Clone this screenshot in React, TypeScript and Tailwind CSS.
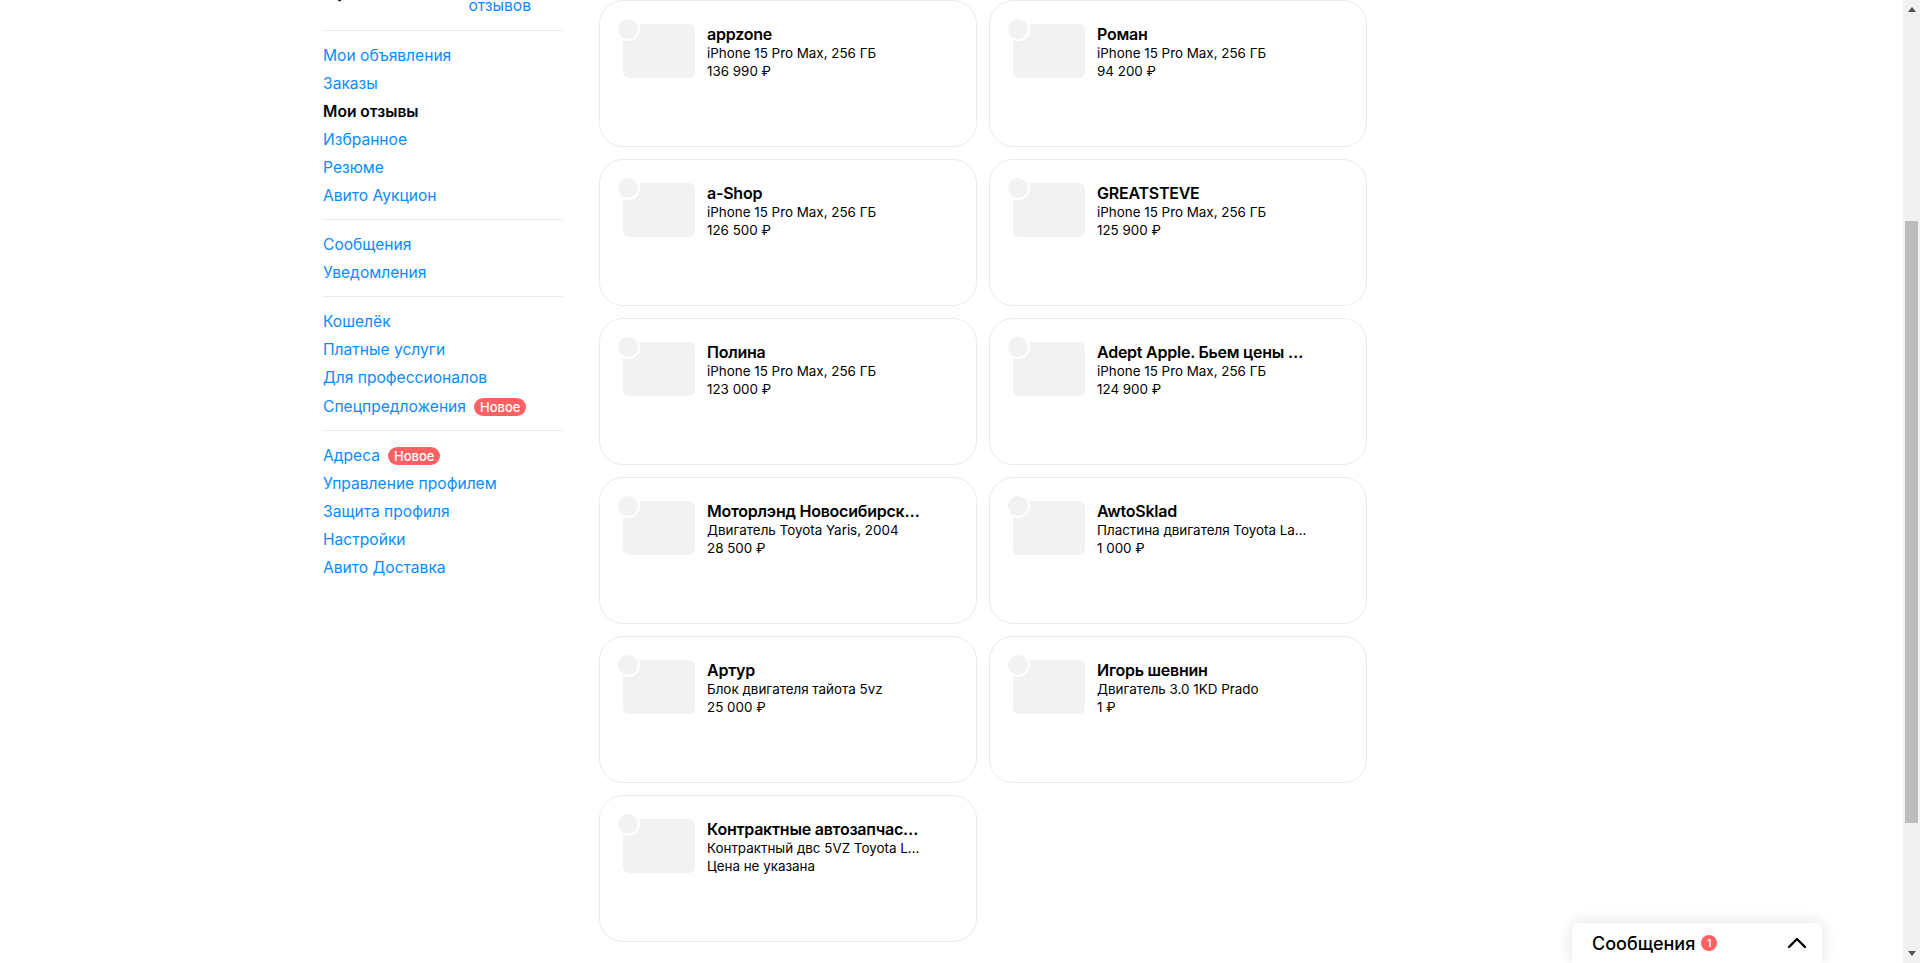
import { ChevronUp } from 'lucide-react';

interface Review {
  name: string;
  item: string;
  price: string;
}

const reviews: Review[] = [
  { name: 'appzone', item: 'iPhone 15 Pro Max, 256 ГБ', price: '136 990 ₽' },
  { name: 'Роман', item: 'iPhone 15 Pro Max, 256 ГБ', price: '94 200 ₽' },
  { name: 'a-Shop', item: 'iPhone 15 Pro Max, 256 ГБ', price: '126 500 ₽' },
  { name: 'GREATSTEVE', item: 'iPhone 15 Pro Max, 256 ГБ', price: '125 900 ₽' },
  { name: 'Полина', item: 'iPhone 15 Pro Max, 256 ГБ', price: '123 000 ₽' },
  { name: 'Adept Apple. Бьем цены конкурентов', item: 'iPhone 15 Pro Max, 256 ГБ', price: '124 900 ₽' },
  { name: 'Моторлэнд Новосибирск Запчасти', item: 'Двигатель Toyota Yaris, 2004', price: '28 500 ₽' },
  { name: 'AwtoSklad', item: 'Пластина двигателя Toyota Land Cruiser', price: '1 000 ₽' },
  { name: 'Артур', item: 'Блок двигателя тайота 5vz', price: '25 000 ₽' },
  { name: 'Игорь шевнин', item: 'Двигатель 3.0 1KD Prado', price: '1 ₽' },
  { name: 'Контрактные автозапчасти', item: 'Контрактный двс 5VZ Toyota Land Cruiser', price: 'Цена не указана' },
];

const menu: { label: string; active?: boolean; isNew?: boolean }[][] = [
  [
    { label: 'Мои объявления' },
    { label: 'Заказы' },
    { label: 'Мои отзывы', active: true },
    { label: 'Избранное' },
    { label: 'Резюме' },
    { label: 'Авито Аукцион' },
  ],
  [{ label: 'Сообщения' }, { label: 'Уведомления' }],
  [
    { label: 'Кошелёк' },
    { label: 'Платные услуги' },
    { label: 'Для профессионалов' },
    { label: 'Спецпредложения', isNew: true },
  ],
  [
    { label: 'Адреса', isNew: true },
    { label: 'Управление профилем' },
    { label: 'Защита профиля' },
    { label: 'Настройки' },
    { label: 'Авито Доставка' },
  ],
];

function Sidebar() {
  return (
    <aside className="w-[240px] shrink-0 text-[15.6px] leading-[28px]">
      <div className="flex h-[31px] justify-between overflow-hidden border-b border-[#ebebeb] pl-[14px] pr-[32px]">
        <span className="-mt-[17px] leading-[20px] text-black">у</span>
        <span className="-mt-[4px] leading-[20px] text-[#0a8cff]">отзывов</span>
      </div>
      {menu.map((group, i) => (
        <div
          key={i}
          className={i < menu.length - 1 ? 'border-b border-[#ebebeb] pb-[9px] pt-[11px]' : 'pb-[10px] pt-[10px]'}
        >
          {group.map((row) => (
            <div key={row.label} className={`flex items-center ${row.isNew ? 'h-[29px]' : 'h-[28px]'}`}>
              <span className={row.active ? 'font-semibold text-black' : 'text-[#0a8cff]'}>{row.label}</span>
              {row.isNew && (
                <span className="ml-2 flex h-[18px] items-center rounded-full bg-[#ff6163] px-[6px] text-[13px] font-medium text-white">
                  Новое
                </span>
              )}
            </div>
          ))}
        </div>
      ))}
    </aside>
  );
}

function ReviewCard({ review }: { review: Review }) {
  return (
    <div className="flex h-[147px] rounded-[24px] border border-[#ebebeb] bg-white pl-[23px] pt-[23px]">
      <div className="relative h-[54px] w-[72px] shrink-0 rounded-[6px] bg-[#f2f2f2]">
        <div className="absolute -left-[7px] -top-[7px] box-content h-5 w-5 rounded-full border-2 border-white bg-[#f2f2f2]" />
      </div>
      <div className="ml-3 w-[216px] min-w-0 text-[13.4px] leading-[18px] text-black">
        <div className="max-w-[213px] truncate text-[16px] font-semibold leading-[20px] tracking-[-0.015em]">{review.name}</div>
        <div className="truncate">{review.item}</div>
        <div className="truncate">{review.price}</div>
      </div>
    </div>
  );
}

function Scrollbar() {
  return (
    <div className="flex h-full w-[17px] shrink-0 flex-col items-center bg-[#f1f1f1]">
      <div className="mt-[7px] h-0 w-0 border-x-[4px] border-b-[5px] border-x-transparent border-b-[#505050]" />
      <div className="mt-[209px] h-[602px] w-[13px] bg-[#bcbcbc]" />
      <div className="mb-[7px] mt-auto h-0 w-0 border-x-[4px] border-t-[5px] border-x-transparent border-t-[#505050]" />
    </div>
  );
}

export default function App() {
  return (
    <div className="relative flex h-[963px] overflow-hidden bg-white font-['Inter','Noto_Sans',sans-serif]">
      <div className="flex min-w-0 flex-1 items-start pl-[323px]">
        <Sidebar />
        <main className="ml-[36px] grid w-[768px] grid-cols-[378px_378px] gap-3">
          {reviews.map((review) => (
            <ReviewCard key={review.name} review={review} />
          ))}
        </main>
      </div>
      <Scrollbar />
      <div className="absolute bottom-0 left-[1572px] flex h-[40px] w-[250px] items-center rounded-t-[6px] bg-white pl-5 pr-[9px] shadow-[0_0_16px_rgba(0,0,0,0.12)]">
        <span className="text-[18px] font-medium text-black">Сообщения</span>
        <span className="ml-[6px] flex h-4 w-4 items-center justify-center rounded-full bg-[#ff6163] text-[11px] font-medium text-white">1</span>
        <ChevronUp className="ml-auto h-8 w-8 text-black" strokeWidth={1.8} />
      </div>
    </div>
  );
}
